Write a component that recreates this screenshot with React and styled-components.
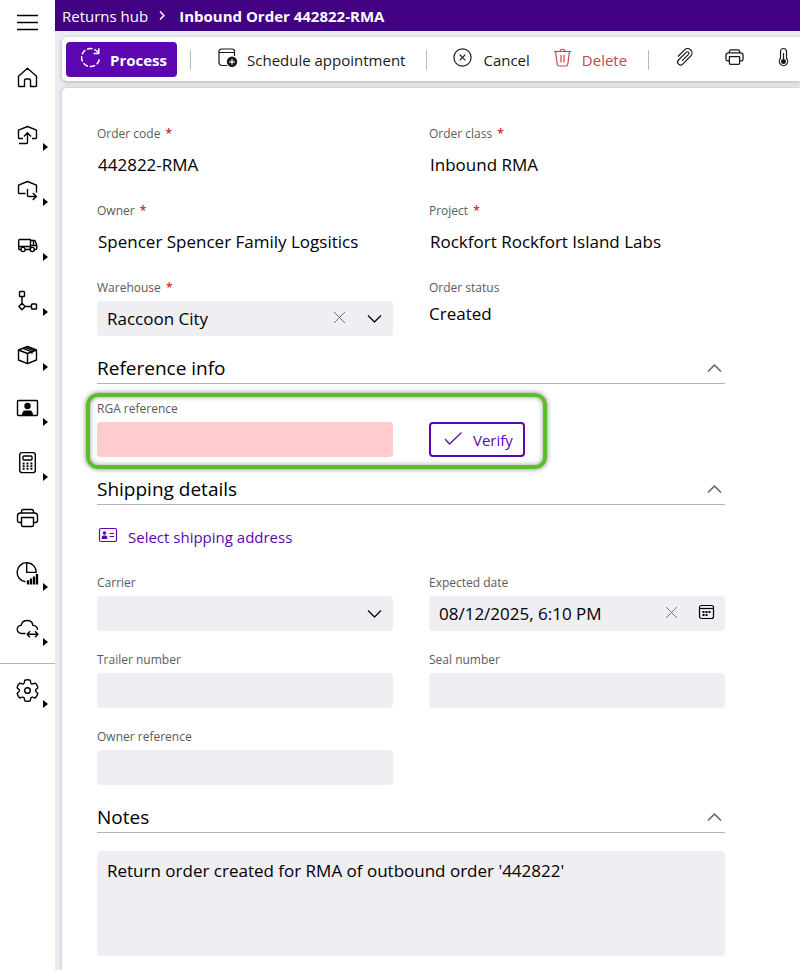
import React from "react";
import styled, { createGlobalStyle } from "styled-components";

const GlobalStyle = createGlobalStyle`
  * {
    box-sizing: border-box;
  }

  body {
    margin: 0;
    background-color: #ebebf1;
    color: #000;
    font-family: "Segoe UI", "Open Sans", "Noto Sans", sans-serif;
    font-size: 16px;
  }

  button,
  input,
  select,
  textarea {
    font-family: inherit;
    color: inherit;
  }
`;

/* Every icon is drawn on the same 23px grid */
const icons = {
  menu: <path d="M1 4.5h21M1 11.5h21M1 18.5h21" />,
  home: (
    <path d="M2.5 10.2 11.5 2.3l9 7.9v9.3a1 1 0 0 1-1 1h-5v-6a1.5 1.5 0 0 0-1.5-1.5h-3a1.5 1.5 0 0 0-1.5 1.5v6h-5a1 1 0 0 1-1-1z" />
  ),
  inbound: (
    <path d="M7 17.5H3.500a1 1 0 0 1-1-1V9.200l9-3.700 9 3.700v7.300a1 1 0 0 1-1 1H16M3 22.500h7.500a1 1 0 0 0 1-1V12M8 15.500l3.500-3.700 3.500 3.700" />
  ),
  outbound: (
    <path d="M9.5 17.5h-6a1 1 0 0 1-1-1V9.2l9-3.7 9 3.7v7.3M11.5 13v6.5a1 1 0 0 0 1 1H20M16.8 17l3.600 3.500-3.600 3.500" />
  ),
  truck: (
    <>
      <path d="M4.7 18.5h-1a1 1 0 0 1-1-1v-8a1 1 0 0 1 1-1h10.800v10H9.400M2.700 15.500h11.800M14.500 9.500h4.500l1.700 4.500v3.500a1 1 0 0 1-1 1h-1M15 14.500h5.300M17.500 10v4.300" />
      <circle cx="7" cy="18.5" r="2.1" />
      <circle cx="16.2" cy="18.5" r="2.1" />
    </>
  ),
  nodes: (
    <>
      <rect x="3.5" y="5.5" width="5" height="5" rx="0.8" />
      <rect x="15.5" y="18" width="5" height="5" rx="0.8" />
      <path d="M6 10.5v7M9 20.5h6.5M6 17.3l3.1 3.2L6 23.7l-3.1-3.2z" />
    </>
  ),
  box: (
    <path d="M11.5 5.5 20.5 9v10l-9 3.7-9-3.7V9zM2.5 9l9 3.5 9-3.5M11.5 12.5v10M7 7.3l9 3.500v2M9.300 6.400l9 3.500" />
  ),
  person: (
    <>
      <rect x="1.5" y="4.5" width="20" height="15" rx="1" />
      <circle cx="11.5" cy="10" r="3.2" fill="currentColor" stroke="none" />
      <path d="M6 19.5c0-3 1-5 3-5h5c2 0 3 2 3 5z" fill="currentColor" stroke="none" />
    </>
  ),
  calculator: (
    <>
      <rect x="3.7" y="1.6" width="15.6" height="20" rx="2.4" />
      <rect x="7" y="5" width="9" height="4" rx="1" />
      <path d="M6.6 12.5h9.8M6.6 15.2h9.8M6.6 17.9h9.8" strokeWidth="1.9" strokeDasharray="2 1.900" />
    </>
  ),
  printer: (
    <path d="M5.5 16.5h-2a2 2 0 0 1-2-2V10a3 3 0 0 1 3-3h14a3 3 0 0 1 3 3v4.5a2 2 0 0 1-2 2h-2M5.5 6.5v-1a2 2 0 0 1 2-2h8a2 2 0 0 1 2 2v1M5.500 11.500h12v7.500a1.500 1.500 0 0 1-1.500 1.500H7A1.500 1.500 0 0 1 5.500 19z" />
  ),
  chart: (
    <>
      <path d="M9.5 20.8a9.6 9.6 0 1 1 10.8-8.8M10.7 1.7v9.7h9.5" />
      <path d="M12 19.300V23.500M15 17.500v6M18 15.500v8M21 13v10.500" strokeWidth="2.3" />
    </>
  ),
  cloud: (
    <path d="M9.5 17.500H5.500a4 4 0 0 1-.2-8.300C5.800 6.200 8.300 4.500 11.200 4.500s5.400 1.900 5.700 4.900c2.700.1 4.600 1.900 4.600 4.600M11.500 18.300h10M14 15.300l-2.900 3 2.900 3M19 15.300l2.900 3-2.900 3" />
  ),
  gear: (
    <>
      <path d="M8.800 1.200c1.700-.6 3.700-.6 5.400 0l.6 2.700c.2.800 1 1.300 1.900 1l2.600-.8c1.300 1.400 2.200 2.900 2.600 4.600l-2 1.900c-.6.6-.6 1.300 0 1.900l2 1.900c-.4 1.700-1.300 3.200-2.600 4.600l-2.600-.8c-.9-.3-1.700.2-1.900 1l-.6 2.700c-1.700.6-3.700.6-5.400 0l-.6-2.700c-.2-.8-1-1.300-1.900-1l-2.600.8c-1.300-1.400-2.200-2.900-2.600-4.600l2-1.900c.6-.6.6-1.300 0-1.900l-2-1.900c.4-1.700 1.300-3.200 2.600-4.600l2.600.8c.9.3 1.700-.2 1.900-1z" />
      <circle cx="11.5" cy="11.5" r="2.8" />
    </>
  ),
  process: (
    <>
      <path d="M19.300 7a9 9 0 1 0 1.200 5.500" strokeDasharray="5.500 1.800" />
      <path d="M19.800 2.300v5.200h-5.300" />
    </>
  ),
  schedule: (
    <>
      <path d="M11 19.500H6a3 3 0 0 1-3-3v-11A2.500 2.500 0 0 1 5.500 3h10.500a2.500 2.500 0 0 1 2.500 2.500V10M3 6.500h15.500" />
      <circle cx="16" cy="15.800" r="5.200" fill="currentColor" stroke="none" />
      <path d="M16 13v5.600M13.200 15.800h5.600" stroke="#fff" />
    </>
  ),
  cancel: (
    <>
      <circle cx="10.5" cy="11.5" r="8.600" />
      <path d="m7.700 8.700 5.600 5.600M13.300 8.700l-5.600 5.600" />
    </>
  ),
  trash: (
    <path d="M3 5.500h17M9 5.500c0-3 5-3 5 0M4.500 5.500l1.700 12.700a2 2 0 0 0 2 1.800h6.600a2 2 0 0 0 2-1.800L18.500 5.500M10 9v7.500M13 9v7.500" />
  ),
  clip: (
    <path d="m4 10.500 6.300-6.300a4.300 4.300 0 0 1 6.600 5.700l-8.200 8.200a2.900 2.900 0 0 1-4.200-4.100l7.800-7.800a1.500 1.500 0 0 1 2.200 2.100L8 14.800" />
  ),
  thermometer: (
    <>
      <path d="M8.500 12.500v-7a3 3 0 0 1 6 0v7a4.200 4.200 0 1 1-6 0z" />
      <path d="M11.500 7v8" />
      <circle cx="11.500" cy="15.500" r="2.500" fill="currentColor" stroke="none" />
    </>
  ),
  check: <path d="m3 12 4.500 5L19.500 5.500" />,
  card: (
    <>
      <rect x="2.500" y="3.500" width="17" height="13" rx="1.500" />
      <circle cx="7.500" cy="8" r="1.800" fill="currentColor" stroke="none" />
      <path d="M4.700 14v-1.500c0-1.500 1-2 2.800-2s2.800.5 2.800 2V14z" fill="currentColor" stroke="none" />
      <path d="M12.500 8.500H17M12.500 11.500H17" />
    </>
  ),
  close: <path d="m6 6 11 11M17 6 6 17" />,
  down: <path d="m5 8.500 6.500 6.500L18 8.500" />,
  up: <path d="m6 15.500 6.500-6.500 6.500 6.500" />,
  next: <path d="m8 7.500 4 4-4 4" />,
  calendar: (
    <>
      <rect x="4.500" y="4.500" width="14" height="13" rx="2" />
      <path d="M4.500 7.500h14" />
      <path d="M7.500 11h8M7.500 14h5" strokeWidth="2" strokeDasharray="2 1" />
    </>
  ),
};

const Icon = ({ name, weight = 1.2, small }) => (
  <IconSvg
    viewBox={small ? "-2 -1 27 27" : "0 0 23 23"}
    strokeWidth={weight}
    aria-hidden="true"
  >
    {icons[name]}
  </IconSvg>
);

const navItems = [
  { icon: "home", label: "Home" },
  { icon: "inbound", label: "Inbound", more: true },
  { icon: "outbound", label: "Outbound", more: true },
  { icon: "truck", label: "Transport", more: true },
  { icon: "nodes", label: "Workflow", more: true },
  { icon: "box", label: "Inventory", more: true },
  { icon: "person", label: "Contacts", more: true },
  { icon: "calculator", label: "Billing", more: true },
  { icon: "printer", label: "Printing" },
  { icon: "chart", label: "Reports", more: true },
  { icon: "cloud", label: "Integrations", more: true },
];

const NavItem = ({ icon, label, more, compact }) => (
  <NavButton type="button" aria-label={label} $compact={compact}>
    <Icon name={icon} weight={1.4} />
    {more && <MoreArrow />}
  </NavButton>
);

const ReadOnly = ({ label, value, required }) => (
  <Field>
    <Label as="span">
      {label} {required && <Required>*</Required>}
    </Label>
    <Value>{value}</Value>
  </Field>
);

const TextField = ({ id, label, invalid }) => {
  const [value, setValue] = React.useState("");

  return (
    <Field>
      <Label htmlFor={id}>{label}</Label>
      <Control $invalid={invalid}>
        <Input id={id} value={value} onChange={(e) => setValue(e.target.value)} />
      </Control>
    </Field>
  );
};

const Section = ({ title, children }) => {
  const [open, setOpen] = React.useState(true);

  return (
    <section>
      <SectionHeader>
        <h2>{title}</h2>
        <IconButton
          type="button"
          aria-label={`Toggle ${title}`}
          onClick={() => setOpen(!open)}
        >
          <Icon name={open ? "up" : "down"} weight={1.6} />
        </IconButton>
      </SectionHeader>
      {open && children}
    </section>
  );
};

const App = () => {
  const [warehouse, setWarehouse] = React.useState("Raccoon City");
  const [carrier, setCarrier] = React.useState("");
  const [date, setDate] = React.useState("08/12/2025, 6:10 PM");
  const [notes, setNotes] = React.useState(
    "Return order created for RMA of outbound order '442822'"
  );

  return (
    <Page>
      <GlobalStyle />

      <Sidebar>
        <MenuButton type="button" aria-label="Menu">
          <Icon name="menu" weight={1.3} />
        </MenuButton>
        {navItems.map((item) => (
          <NavItem key={item.icon} {...item} />
        ))}
        <NavDivider />
        <NavItem icon="gear" label="Settings" more compact />
      </Sidebar>

      <Content>
        <Header>
          <a href="#returns">Returns hub</a>
          <Icon name="next" weight={1.5} />
          <strong>Inbound Order 442822-RMA</strong>
        </Header>

        <Toolbar>
          <ProcessButton type="button">
            <Icon name="process" weight={1.5} />
            Process
          </ProcessButton>
          <Separator />
          <ToolButton type="button">
            <Icon name="schedule" />
            Schedule appointment
          </ToolButton>
          <Separator />
          <ToolButton type="button">
            <Icon name="cancel" />
            Cancel
          </ToolButton>
          <ToolButton type="button" $danger>
            <Icon name="trash" />
            Delete
          </ToolButton>
          <Separator />
          <ToolIconButton type="button" aria-label="Attachments">
            <Icon name="clip" />
          </ToolIconButton>
          <ToolIconButton type="button" aria-label="Print">
            <Icon name="printer" weight={1.5} small />
          </ToolIconButton>
          <ToolIconButton type="button" aria-label="Temperature">
            <Icon name="thermometer" />
          </ToolIconButton>
        </Toolbar>

        <Form onSubmit={(e) => e.preventDefault()}>
          <Grid>
            <ReadOnly label="Order code" value="442822-RMA" required />
            <ReadOnly label="Order class" value="Inbound RMA" required />
            <ReadOnly label="Owner" value="Spencer Spencer Family Logsitics" required />
            <ReadOnly label="Project" value="Rockfort Rockfort Island Labs" required />
            <Field>
              <Label htmlFor="warehouse">
                Warehouse <Required>*</Required>
              </Label>
              <Control>
                <Select
                  id="warehouse"
                  value={warehouse}
                  onChange={(e) => setWarehouse(e.target.value)}
                >
                  <option value="" />
                  <option>Raccoon City</option>
                </Select>
                <ClearButton
                  type="button"
                  aria-label="Clear warehouse"
                  onClick={() => setWarehouse("")}
                >
                  <Icon name="close" weight={1} />
                </ClearButton>
                <Icon name="down" />
              </Control>
            </Field>
            <Field>
              <Label as="span">Order status</Label>
              <Status>Created</Status>
            </Field>
          </Grid>

          <Section title="Reference info">
            <ReferenceRow>
              <TextField id="rga" label="RGA reference" invalid />
              <VerifyButton type="button">
                <Icon name="check" />
                Verify
              </VerifyButton>
              <Highlight />
            </ReferenceRow>
          </Section>

          <Section title="Shipping details">
            <AddressLink href="#address">
              <Icon name="card" />
              Select shipping address
            </AddressLink>
            <Grid>
              <Field>
                <Label htmlFor="carrier">Carrier</Label>
                <Control>
                  <Select
                    id="carrier"
                    value={carrier}
                    onChange={(e) => setCarrier(e.target.value)}
                  >
                    <option value="" />
                  </Select>
                  <Icon name="down" />
                </Control>
              </Field>
              <Field>
                <Label htmlFor="expected">Expected date</Label>
                <Control>
                  <Input
                    id="expected"
                    value={date}
                    onChange={(e) => setDate(e.target.value)}
                  />
                  <ClearButton
                    type="button"
                    aria-label="Clear date"
                    onClick={() => setDate("")}
                  >
                    <Icon name="close" weight={1} />
                  </ClearButton>
                  <IconButton type="button" aria-label="Pick date">
                    <Icon name="calendar" />
                  </IconButton>
                </Control>
              </Field>
              <TextField id="trailer" label="Trailer number" />
              <TextField id="seal" label="Seal number" />
              <TextField id="ownerRef" label="Owner reference" />
            </Grid>
          </Section>

          <Section title="Notes">
            <NotesArea
              aria-label="Notes"
              value={notes}
              onChange={(e) => setNotes(e.target.value)}
            />
          </Section>
        </Form>
      </Content>
    </Page>
  );
};

export default App;

const IconSvg = styled.svg`
  width: 23px;
  height: 23px;
  flex: none;
  display: block;
  overflow: visible;
  fill: none;
  stroke: currentColor;
  stroke-linejoin: round;
`;

const Page = styled.div`
  display: flex;
  min-height: 100vh;
`;

/* Sidebar */
const Sidebar = styled.nav`
  width: 55px;
  flex: none;
  display: flex;
  flex-direction: column;
  background-color: #fff;
`;

const NavButton = styled.button`
  position: relative;
  height: ${(props) => (props.$compact ? "53px" : "55px")};
  padding: 0;
  border: 0;
  background: none;
  display: flex;
  align-items: center;
  justify-content: center;
  cursor: pointer;
`;

const MenuButton = styled(NavButton)`
  height: 45px;
  margin-bottom: 5px;
`;

const MoreArrow = styled.span`
  position: absolute;
  right: 7px;
  bottom: 9px;
  border: 4px solid transparent;
  border-left: 5px solid #000;
  border-right: 0;
`;

const NavDivider = styled.hr`
  width: 100%;
  margin: 8px 0 0;
  border: 0;
  border-top: 1px solid #b4b4b4;
`;

/* Header and toolbar */
const Content = styled.main`
  flex: 1;
  min-width: 0;
  display: flex;
  flex-direction: column;
`;

const Header = styled.header`
  height: 31px;
  padding: 0 7px;
  display: flex;
  align-items: center;
  gap: 4px;
  background-color: #420083;
  color: #fff;
  font-size: 15px;
  white-space: nowrap;

  a {
    color: inherit;
    text-decoration: none;
  }
`;

const Toolbar = styled.div`
  margin: 6px 0 0 7px;
  padding: 5px 4px 4px;
  display: flex;
  align-items: center;
  overflow: hidden;
  border-radius: 5px 0 0 5px;
  background-color: #fff;
  box-shadow: 0 1px 4px rgba(0, 0, 0, 0.25);
`;

const ToolButton = styled.button`
  height: 35px;
  padding: 0 8px 0 13px;
  border: 0;
  border-radius: 4px;
  flex: none;
  display: flex;
  align-items: center;
  gap: 8px;
  background: none;
  color: ${(props) => (props.$danger ? "#c8474b" : "#1a1a1a")};
  font-size: 15px;
  cursor: pointer;

  svg {
    margin-bottom: 4px;
  }
`;

const ToolIconButton = styled(ToolButton)`
  padding: 0 13px;
`;

const ProcessButton = styled(ToolButton)`
  padding: 0 10px 0 13px;
  background-color: #5c06b2;
  color: #fff;
  font-weight: 700;
`;

const Separator = styled.span`
  width: 1px;
  height: 20px;
  margin: 0 12px 0 13px;
  flex: none;
  background-color: #b8b8b8;
`;

/* Form */
const Form = styled.form`
  flex: 1;
  margin: 7px 0 0 7px;
  padding: 35px 75px 14px 35px;
  border-radius: 5px 0 0 0;
  background-color: #fff;
  box-shadow: 0 0 4px rgba(0, 0, 0, 0.2);
`;

const Grid = styled.div`
  display: grid;
  grid-template-columns: 1fr 1fr;
  gap: 18px 36px;
`;

const Field = styled.div`
  display: flex;
  flex-direction: column;
  gap: 3px;
  min-width: 0;
`;

const Label = styled.label`
  color: #5a5a5a;
  font-size: 12px;
  line-height: 21px;
`;

const Required = styled.span`
  margin-left: 2px;
  color: #c4262e;
  font-weight: 600;
`;

const Value = styled.span`
  padding-left: 1px;
  font-size: 17px;
  line-height: 35px;
  white-space: nowrap;
`;

const Status = styled.span`
  font-size: 17px;
  line-height: 26px;
`;

const Control = styled.div`
  height: 35px;
  padding: 0 7px 0 10px;
  display: flex;
  align-items: center;
  gap: 12px;
  border-radius: 4px;
  background-color: ${(props) => (props.$invalid ? "#ffcccd" : "#efeef3")};
`;

const Input = styled.input`
  flex: 1;
  min-width: 0;
  height: 100%;
  padding: 0;
  border: 0;
  outline: 0;
  background: none;
  font-size: 17px;
`;

const Select = styled.select`
  flex: 1;
  min-width: 0;
  height: 100%;
  padding: 0;
  border: 0;
  outline: 0;
  appearance: none;
  background: none;
  font-size: 17px;
`;

const IconButton = styled.button`
  padding: 0 0 2px;
  border: 0;
  background: none;
  cursor: pointer;
`;

const ClearButton = styled(IconButton)`
  color: #777;
`;

const SectionHeader = styled.div`
  height: 35px;
  margin-top: 13px;
  padding-top: 4px;
  display: flex;
  align-items: center;
  justify-content: space-between;
  border-bottom: 1px solid #b4b4b4;
  color: #666;

  h2 {
    margin: 0;
    color: #000;
    font-size: 19px;
    font-weight: 400;
  }
`;

const ReferenceRow = styled(Grid)`
  position: relative;
  align-items: end;
  padding-top: 14px;
`;

/* Callout drawn over the row that needs attention */
const Highlight = styled.div`
  position: absolute;
  top: 9px;
  right: calc(50% - 136px);
  bottom: -12px;
  left: -11px;
  border: 4px solid #5bbd2b;
  border-radius: 12px;
  box-shadow: 0 0 5px rgba(0, 0, 0, 0.5), inset 0 0 5px rgba(0, 0, 0, 0.4);
  pointer-events: none;
`;

const VerifyButton = styled(ToolButton)`
  justify-self: start;
  padding: 0 10px 0 11px;
  border: 2px solid #5c06b2;
  color: #5c06b2;

  svg {
    margin-bottom: 2px;
  }
`;

const AddressLink = styled.a`
  height: 35px;
  margin: 14px 0 18px;
  display: flex;
  align-items: center;
  gap: 8px;
  color: #5c06b2;
  font-size: 15px;
  text-decoration: none;
`;

const NotesArea = styled.textarea`
  width: 100%;
  height: 105px;
  margin-top: 18px;
  padding: 8px 10px;
  display: block;
  border: 0;
  border-radius: 4px;
  outline: 0;
  resize: none;
  background-color: #efeef3;
  font-size: 17px;
`;
